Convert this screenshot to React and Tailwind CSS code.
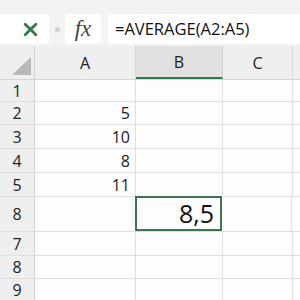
import React from "react";

const rows = [
  { n: "1", h: "h-[22px]", a: "" },
  { n: "2", h: "h-[23px]", a: "5" },
  { n: "3", h: "h-[24px]", a: "10" },
  { n: "4", h: "h-[24px]", a: "8" },
  { n: "5", h: "h-[24px]", a: "11" },
  { n: "8", h: "h-[35px]", a: "", b: "8,5" },
  { n: "7", h: "h-[24px]", a: "" },
  { n: "8", h: "h-[23px]", a: "" },
  { n: "9", h: "h-[23px]", a: "" },
];

const App = () => {
  return (
    <div className="w-[300px] h-[300px] overflow-hidden bg-[#f3f3f3] text-[#222] font-['Open_Sans','Noto_Sans',sans-serif]">
      {/* Formula bar */}
      <div className="flex items-center h-[46px] pt-[14px] pb-[2px] gap-0">
        <div className="flex items-center justify-end w-[49px] h-[30px] bg-white rounded-r-[4px] pr-[11px]">
          <svg width="15" height="15" viewBox="0 0 14 14">
            <path d="M2 2 L12 12 M12 2 L2 12" stroke="#2f7a4e" strokeWidth="2.6" strokeLinecap="round" />
          </svg>
        </div>
        <div className="w-[16px] flex justify-center">
          <div className="w-[5px] h-[5px] rounded-full bg-[#cfcfcf]" />
        </div>
        <div className="flex items-center justify-center w-[36px] h-[30px] bg-white rounded-[4px] font-['Liberation_Serif',serif] italic text-[23px] text-[#444]">
          fx
        </div>
        <div className="ml-[7px] flex items-center flex-1 h-[30px] bg-white rounded-l-[4px] pl-[7px] text-[16.5px] text-[#111] whitespace-nowrap">
          =AVERAGE(A2:A5)
        </div>
      </div>

      {/* Column headers */}
      <div className="flex h-[34px] bg-[#efefef] border-b border-[#d6d6d6] text-[16px] text-[#222]">
        <div className="relative w-[35px] border-r border-[#d0d0d0]">
          <div className="absolute right-[3px] bottom-[4px] w-0 h-0 border-l-[19px] border-l-transparent border-b-[18px] border-b-[#b8b8b8]" />
        </div>
        <div className="w-[101px] flex items-center justify-center border-r border-[#d8d8d8]">A</div>
        <div className="w-[87px] flex items-center justify-center bg-[#e0e0e0] border-r border-[#cfcfcf] border-b-2 border-b-[#2f7a4e]">B</div>
        <div className="w-[70px] flex items-center justify-center border-r border-[#d8d8d8]">C</div>
        <div className="flex-1" />
      </div>

      {/* Grid */}
      {rows.map((r, i) => (
        <div key={i} className={`flex ${r.h} border-b border-[#dedede] bg-[#fdfdfd]`}>
          <div className="w-[35px] flex items-center justify-center bg-[#efefef] border-r border-[#d0d0d0] text-[16px]">
            {r.n}
          </div>
          <div className="w-[101px] flex items-center justify-end pr-[5px] border-r border-[#e0e0e0] text-[16px]">
            {r.a}
          </div>
          {r.b ? (
            <div className="w-[87px] flex items-center justify-end pr-[6px] border-2 border-[#3d7352] -mt-px -ml-px text-[25px] font-medium text-[#111]">
              {r.b}
            </div>
          ) : (
            <div className="w-[87px] border-r border-[#e0e0e0]" />
          )}
          <div className="w-[70px] border-r border-[#e0e0e0]" />
          <div className="flex-1" />
        </div>
      ))}
    </div>
  );
};

export default App;
